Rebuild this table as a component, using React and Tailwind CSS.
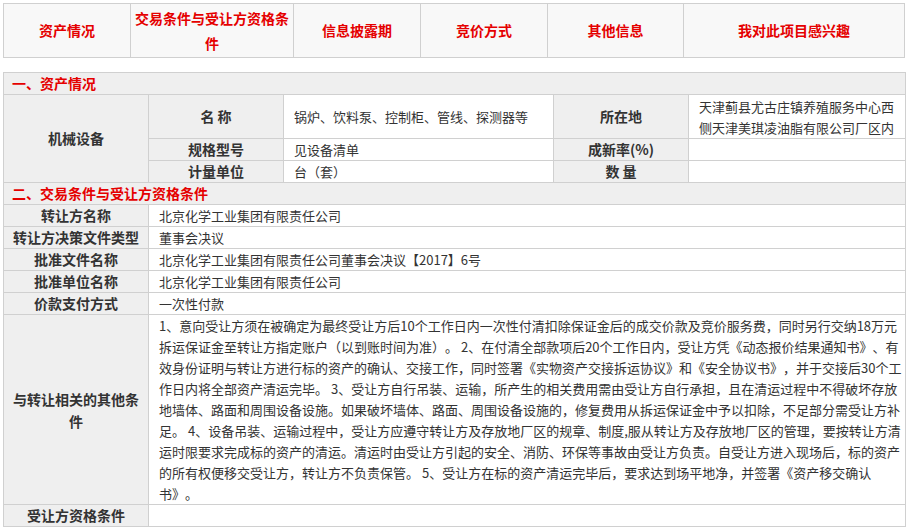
import React from "react";

const tabs = [
  { label: "资产情况", w: "w-[127px]" },
  { label: "交易条件与受让方资格条件", w: "w-[163px]" },
  { label: "信息披露期", w: "w-[127px]" },
  { label: "竞价方式", w: "w-[127px]" },
  { label: "其他信息", w: "w-[136px]" },
  { label: "我对此项目感兴趣", w: "flex-1" },
];

const transferRows = [
  ["转让方名称", "北京化学工业集团有限责任公司"],
  ["转让方决策文件类型", "董事会决议"],
  ["批准文件名称", "北京化学工业集团有限责任公司董事会决议【2017】6号"],
  ["批准单位名称", "北京化学工业集团有限责任公司"],
  ["价款支付方式", "一次性付款"],
];

const otherLines = [
  "1、意向受让方须在被确定为最终受让方后10个工作日内一次性付清扣除保证金后的成交价款及竞价服务费，同时另行交纳18万元",
  "拆运保证金至转让方指定账户（以到账时间为准）。 2、在付清全部款项后20个工作日内，受让方凭《动态报价结果通知书》、有",
  "效身份证明与转让方进行标的资产的确认、交接工作，同时签署《实物资产交接拆运协议》和《安全协议书》，并于交接后30个工",
  "作日内将全部资产清运完毕。 3、受让方自行吊装、运输，所产生的相关费用需由受让方自行承担，且在清运过程中不得破坏存放",
  "地墙体、路面和周围设备设施。如果破坏墙体、路面、周围设备设施的，修复费用从拆运保证金中予以扣除，不足部分需受让方补",
  "足。 4、设备吊装、运输过程中，受让方应遵守转让方及存放地厂区的规章、制度,服从转让方及存放地厂区的管理，要按转让方清",
  "运时限要求完成标的资产的清运。清运时由受让方引起的安全、消防、环保等事故由受让方负责。自受让方进入现场后，标的资产",
  "的所有权便移交受让方，转让方不负责保管。 5、受让方在标的资产清运完毕后，要求达到场平地净，并签署《资产移交确认",
  "书》。",
];

const label =
  "border border-[#d0d0d0] bg-[#efefef] px-[5px] text-center text-[14px] font-bold leading-[21px] text-[#333]";
const value =
  "border border-[#d0d0d0] bg-white pl-[10px] text-left text-[13px] leading-[21px] text-[#333]";
const section =
  "border border-[#d0d0d0] bg-[#efefef] pl-[8px] text-left text-[14px] font-bold leading-[21px] text-[#e50000]";

export default function App() {
  return (
    <div className="min-h-screen bg-white pl-[3px] pt-[3px] font-['Noto_Sans_CJK_SC','Microsoft_YaHei',sans-serif] [text-spacing-trim:space-all]">
      {/* Tabs */}
      <div className="flex h-[55px] w-[902px] border border-[#d0d0d0] bg-[#f8f8f8]">
        {tabs.map((t, i) => (
          <div
            key={t.label}
            className={`${t.w} flex items-center justify-center px-[4px] text-center text-[14px] font-bold leading-[25px] text-[#e50000] ${
              i < tabs.length - 1 ? "border-r border-[#d0d0d0]" : ""
            }`}
          >
            {t.label}
          </div>
        ))}
      </div>

      {/* Detail table */}
      <table className="mt-[14px] w-[902px] table-fixed border-collapse">
        <colgroup>
          <col className="w-[145px]" />
          <col className="w-[135px]" />
          <col className="w-[270px]" />
          <col className="w-[135px]" />
          <col className="w-[217px]" />
        </colgroup>
        <tbody>
          <tr>
            <td colSpan={5} className={section}>
              一、资产情况
            </td>
          </tr>
          <tr className="h-[44px]">
            <td rowSpan={3} className={label}>
              机械设备
            </td>
            <td className={label}>名 称</td>
            <td className={value}>锅炉、饮料泵、控制柜、管线、探测器等</td>
            <td className={label}>所在地</td>
            <td className={value}>
              天津蓟县尤古庄镇养殖服务中心西侧天津美琪凌油脂有限公司厂区内
            </td>
          </tr>
          <tr>
            <td className={label}>规格型号</td>
            <td className={value}>见设备清单</td>
            <td className={label}>成新率(%)</td>
            <td className={value}></td>
          </tr>
          <tr>
            <td className={label}>计量单位</td>
            <td className={value}>台（套）</td>
            <td className={label}>数 量</td>
            <td className={value}></td>
          </tr>
          <tr>
            <td colSpan={5} className={section}>
              二、交易条件与受让方资格条件
            </td>
          </tr>
          {transferRows.map(([k, v]) => (
            <tr key={k}>
              <td className={label}>{k}</td>
              <td colSpan={4} className={value}>
                {v}
              </td>
            </tr>
          ))}
          <tr>
            <td className={`${label} leading-[22px]`}>与转让相关的其他条件</td>
            <td colSpan={4} className={`${value} pr-0`}>
              {otherLines.map((line, i) => (
                <div key={i} className="whitespace-nowrap">
                  {line}
                </div>
              ))}
            </td>
          </tr>
          <tr>
            <td className={label}>受让方资格条件</td>
            <td colSpan={4} className={value}></td>
          </tr>
        </tbody>
      </table>
    </div>
  );
}
